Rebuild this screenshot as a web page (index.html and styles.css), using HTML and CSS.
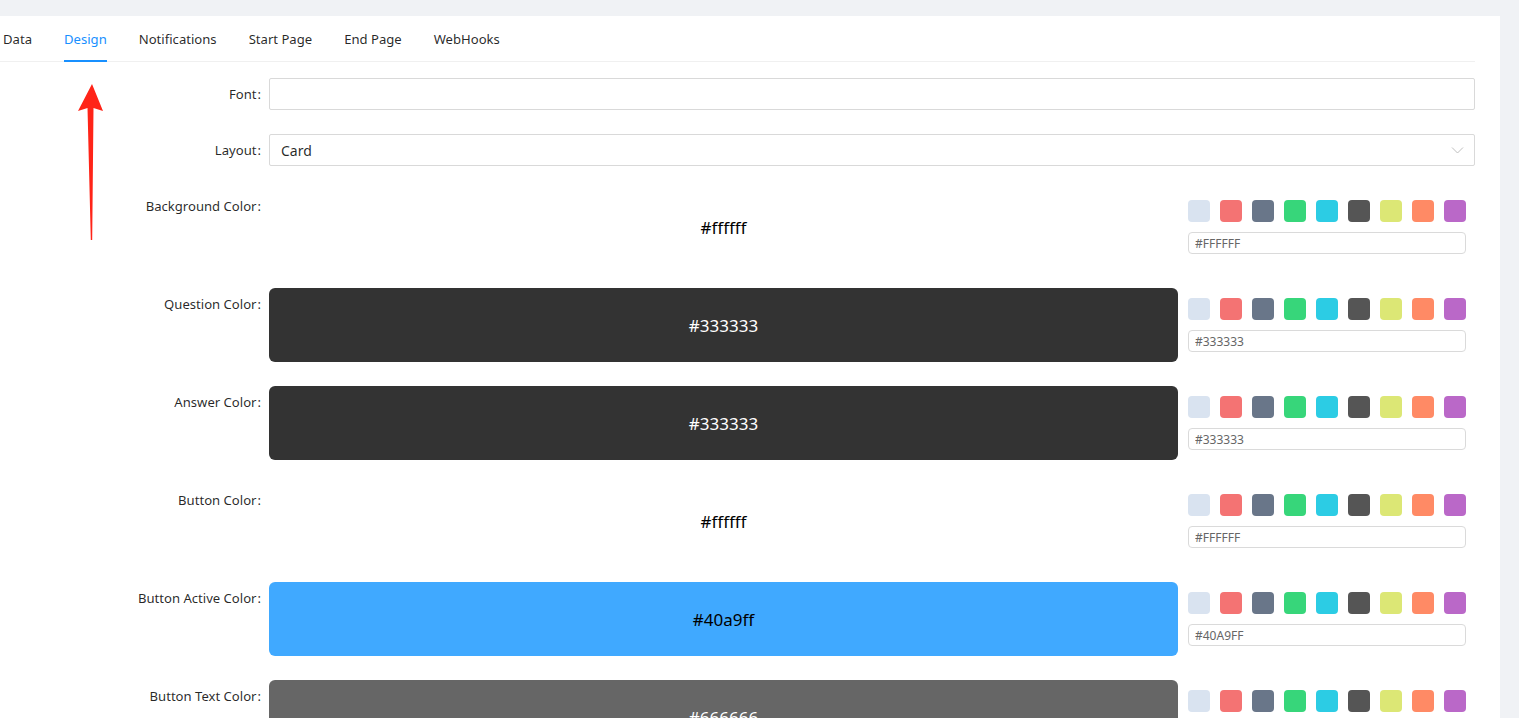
FILE: index.html
```html
<!DOCTYPE html>
<html lang="en">
<head>
  <meta charset="UTF-8">
  <title>Survey Settings - Design</title>
  <link rel="stylesheet" href="styles.css">
</head>
<body>
  <div class="card">
    <div class="tabs">
      <div class="tab">Data</div>
      <div class="tab active">Design</div>
      <div class="tab">Notifications</div>
      <div class="tab">Start Page</div>
      <div class="tab">End Page</div>
      <div class="tab">WebHooks</div>
    </div>

    <form class="form">
      <div class="form-item">
        <label class="label">Font<span class="colon">:</span></label>
        <input class="input" type="text">
      </div>

      <div class="form-item">
        <label class="label">Layout<span class="colon">:</span></label>
        <div class="select">
          <span>Card</span>
          <svg class="chevron" width="13" height="12" viewBox="0 0 13 12"><path d="M1 3.5l5.5 5.5 5.5-5.5" fill="none" stroke="#bfbfbf" stroke-width="1"/></svg>
        </div>
      </div>

      <div class="form-item color-item">
        <label class="label">Background Color<span class="colon">:</span></label>
        <div class="color-row">
          <div class="color-block light" style="background:#ffffff">#ffffff</div>
          <div class="picker">
            <div class="swatches"><span></span><span></span><span></span><span></span><span></span><span></span><span></span><span></span><span></span></div>
            <input class="hex" type="text" value="#FFFFFF">
          </div>
        </div>
      </div>

      <div class="form-item color-item">
        <label class="label">Question Color<span class="colon">:</span></label>
        <div class="color-row">
          <div class="color-block dark" style="background:#333333">#333333</div>
          <div class="picker">
            <div class="swatches"><span></span><span></span><span></span><span></span><span></span><span></span><span></span><span></span><span></span></div>
            <input class="hex" type="text" value="#333333">
          </div>
        </div>
      </div>

      <div class="form-item color-item">
        <label class="label">Answer Color<span class="colon">:</span></label>
        <div class="color-row">
          <div class="color-block dark" style="background:#333333">#333333</div>
          <div class="picker">
            <div class="swatches"><span></span><span></span><span></span><span></span><span></span><span></span><span></span><span></span><span></span></div>
            <input class="hex" type="text" value="#333333">
          </div>
        </div>
      </div>

      <div class="form-item color-item">
        <label class="label">Button Color<span class="colon">:</span></label>
        <div class="color-row">
          <div class="color-block light" style="background:#ffffff">#ffffff</div>
          <div class="picker">
            <div class="swatches"><span></span><span></span><span></span><span></span><span></span><span></span><span></span><span></span><span></span></div>
            <input class="hex" type="text" value="#FFFFFF">
          </div>
        </div>
      </div>

      <div class="form-item color-item">
        <label class="label">Button Active Color<span class="colon">:</span></label>
        <div class="color-row">
          <div class="color-block light" style="background:#40a9ff">#40a9ff</div>
          <div class="picker">
            <div class="swatches"><span></span><span></span><span></span><span></span><span></span><span></span><span></span><span></span><span></span></div>
            <input class="hex" type="text" value="#40A9FF">
          </div>
        </div>
      </div>

      <div class="form-item color-item">
        <label class="label">Button Text Color<span class="colon">:</span></label>
        <div class="color-row">
          <div class="color-block dark" style="background:#666666">#666666</div>
          <div class="picker">
            <div class="swatches"><span></span><span></span><span></span><span></span><span></span><span></span><span></span><span></span><span></span></div>
            <input class="hex" type="text" value="#666666">
          </div>
        </div>
      </div>
    </form>

    <!-- annotation arrow pointing at the Design tab -->
    <svg class="arrow" width="30" height="160" viewBox="0 0 30 160">
      <path d="M15 0 L26 27 L16.5 24 L15.2 156 L13.8 156 L10.5 24 L1 27 Z" fill="#ff2418"/>
    </svg>
  </div>
</body>
</html>
```

FILE: styles.css
```css
html, body {
  margin: 0;
  padding: 0;
  height: 100%;
  overflow: hidden;
}
body {
  background: #f0f2f5;
  font-family: "Noto Sans", "Open Sans", sans-serif;
  font-size: 14px;
  color: rgba(0, 0, 0, 0.85);
}
.card {
  position: relative;
  background: #fff;
  margin-top: 16px;
  width: 1500px;
  min-height: 800px;
  padding-right: 25px;
  box-sizing: border-box;
}
.tabs {
  display: flex;
  gap: 32px;
  padding-left: 3px;
  border-bottom: 1px solid #f0f0f0;
  height: 45px;
  font-size: 13.1px;
}
.tab {
  padding: 12px 0;
  line-height: 22px;
  position: relative;
  cursor: pointer;
}
.tab.active {
  color: #1890ff;
}
.tab.active::after {
  content: "";
  position: absolute;
  left: 0;
  right: 0;
  bottom: -1px;
  height: 2px;
  background: #1890ff;
}
.form {
  padding-top: 16px;
}
.form-item {
  display: grid;
  grid-template-columns: 261px 1fr;
  column-gap: 8px;
  margin-bottom: 24px;
}
.label {
  text-align: right;
  line-height: 32px;
  white-space: nowrap;
  font-size: 13.1px;
}
.colon {
  margin-left: 1px;
}
.input, .select {
  height: 32px;
  box-sizing: border-box;
  border: 1px solid #d9d9d9;
  border-radius: 2px;
  font: inherit;
  padding: 4px 11px;
  outline: none;
}
.select {
  display: flex;
  align-items: center;
  justify-content: space-between;
  padding-right: 10px;
}
.color-row {
  display: flex;
  gap: 10px;
  align-items: flex-start;
}
.color-block {
  width: 909px;
  height: 74px;
  border-radius: 6px;
  display: flex;
  align-items: center;
  justify-content: center;
  font-size: 17px;
}
.color-block.dark {
  color: #fff;
}
.color-block.light {
  color: #000;
}
.picker {
  width: 278px;
  padding-top: 10px;
}
.swatches {
  display: flex;
  gap: 10px;
}
.swatches span {
  width: 22px;
  height: 22px;
  border-radius: 4px;
}
.swatches span:nth-child(1) { background: #d9e3f0; }
.swatches span:nth-child(2) { background: #f47373; }
.swatches span:nth-child(3) { background: #697689; }
.swatches span:nth-child(4) { background: #37d67a; }
.swatches span:nth-child(5) { background: #2ccce4; }
.swatches span:nth-child(6) { background: #555555; }
.swatches span:nth-child(7) { background: #dce775; }
.swatches span:nth-child(8) { background: #ff8a65; }
.swatches span:nth-child(9) { background: #ba68c8; }
.hex {
  display: block;
  margin-top: 10px;
  width: 100%;
  height: 22px;
  box-sizing: border-box;
  border: 1px solid #dadada;
  border-radius: 4px;
  padding: 0 6px;
  font: inherit;
  font-size: 12px;
  color: #666;
  outline: none;
}
.arrow {
  position: absolute;
  left: 77px;
  top: 68px;
}
```
